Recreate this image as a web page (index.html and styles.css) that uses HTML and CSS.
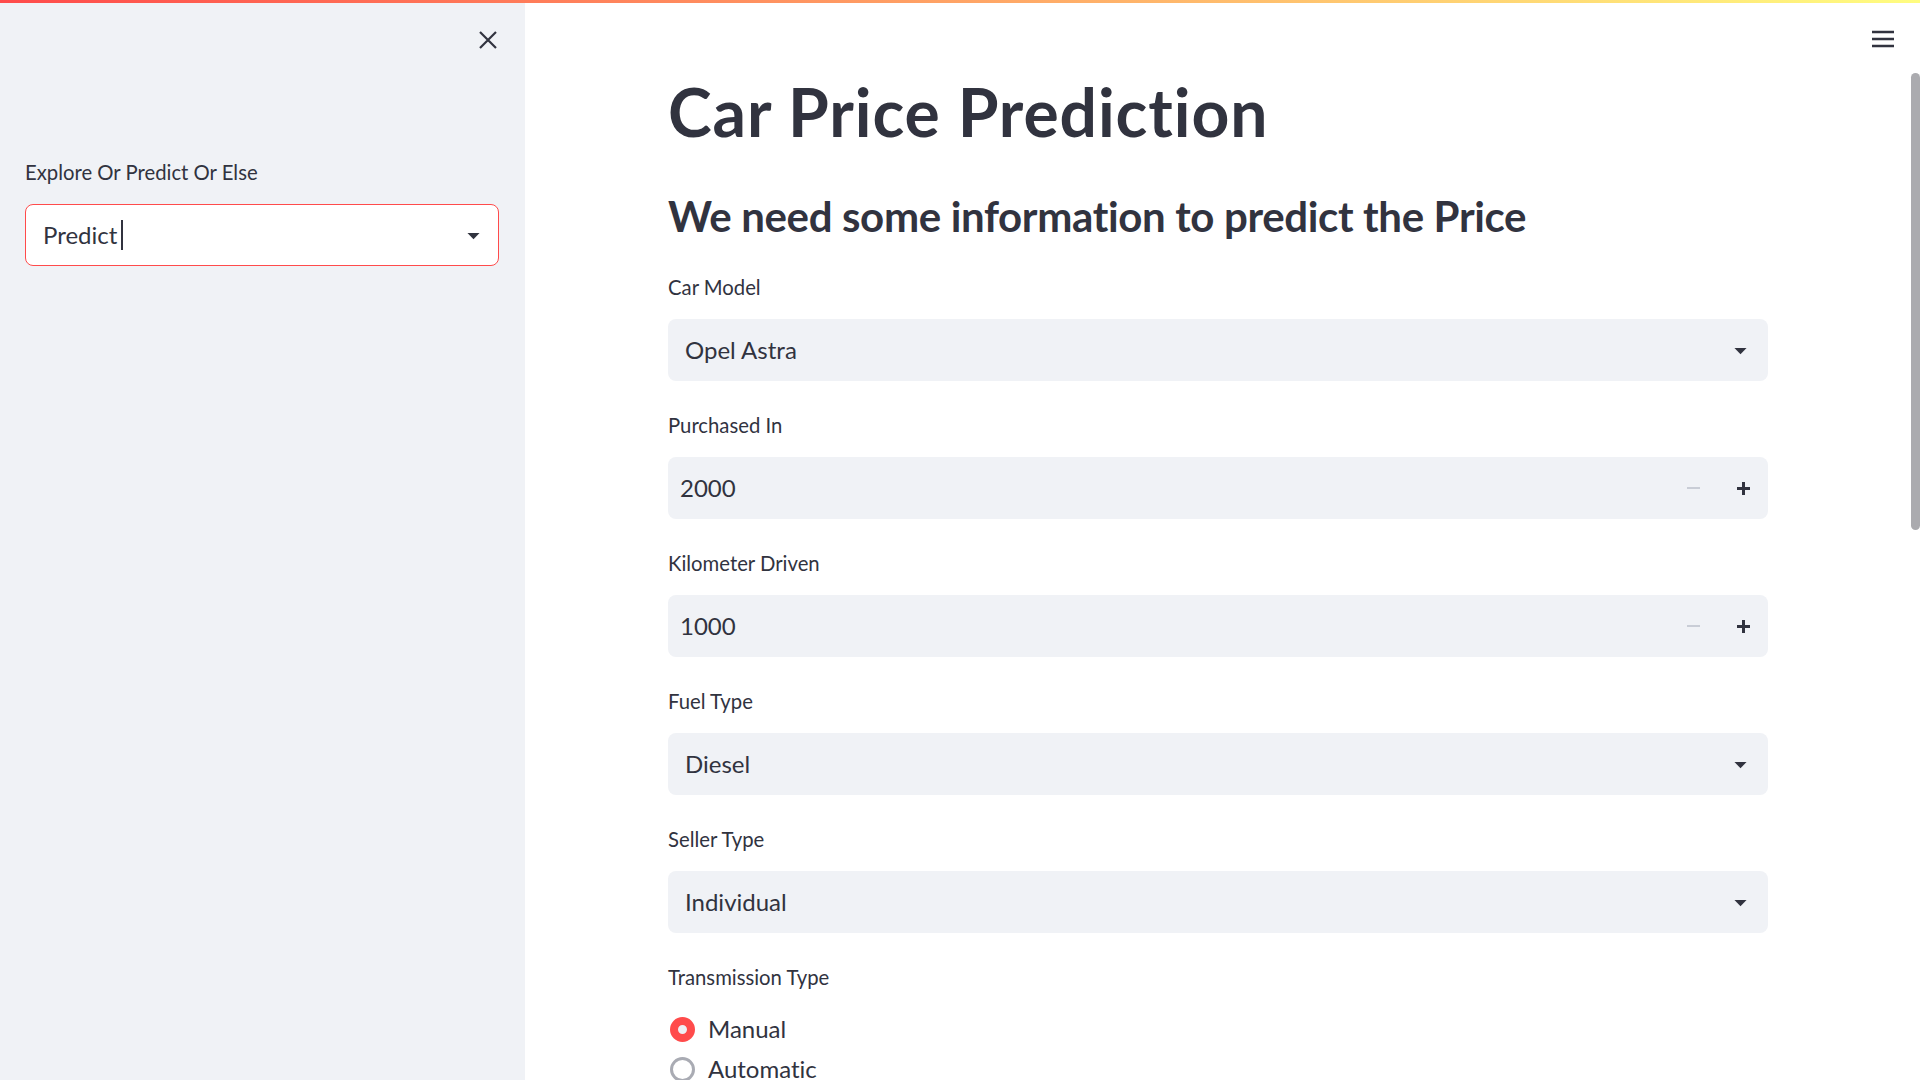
FILE: index.html
```html
<!DOCTYPE html>
<html lang="en">
<head>
<meta charset="utf-8">
<title>Car Price Prediction</title>
<link rel="stylesheet" href="styles.css">
</head>
<body>
<div class="decoration"></div>
<div class="app">
  <aside class="sidebar">
    <div class="sidebar-top">
      <button class="close-btn" aria-label="Close sidebar">
        <svg width="18" height="18" viewBox="0 0 18 18"><path d="M1 1L17 17M17 1L1 17" stroke="#31333f" stroke-width="2.2" fill="none"/></svg>
      </button>
    </div>
    <div class="field">
      <div class="label">Explore Or Predict Or Else</div>
      <div class="select select-focus">
        <span class="value">Predict</span><span class="caret"></span>
        <svg class="arrow" width="29" height="29" viewBox="0 0 24 24"><path d="M7 10l5 5 5-5z" fill="#31333f"/></svg>
      </div>
    </div>
  </aside>

  <main class="main">
    <button class="menu-btn" aria-label="Menu">
      <svg width="24" height="24" viewBox="0 0 24 24"><path d="M1 5H23M1 12H23M1 19H23" stroke="#31333f" stroke-width="2.6" fill="none"/></svg>
    </button>
    <div class="scroll-thumb"></div>

    <div class="block">
      <h1 class="title">Car Price Prediction</h1>
      <h2 class="subtitle">We need some information to predict the Price</h2>

      <div class="field">
        <div class="label">Car Model</div>
        <div class="select">
          <span class="value">Opel Astra</span>
          <svg class="arrow" width="29" height="29" viewBox="0 0 24 24"><path d="M7 10l5 5 5-5z" fill="#31333f"/></svg>
        </div>
      </div>

      <div class="field">
        <div class="label">Purchased In</div>
        <div class="number">
          <span class="num-value">2000</span>
          <span class="step step-minus"><i class="minus"></i></span>
          <span class="step"><i class="plus"></i></span>
        </div>
      </div>

      <div class="field">
        <div class="label">Kilometer Driven</div>
        <div class="number">
          <span class="num-value">1000</span>
          <span class="step step-minus"><i class="minus"></i></span>
          <span class="step"><i class="plus"></i></span>
        </div>
      </div>

      <div class="field">
        <div class="label">Fuel Type</div>
        <div class="select">
          <span class="value">Diesel</span>
          <svg class="arrow" width="29" height="29" viewBox="0 0 24 24"><path d="M7 10l5 5 5-5z" fill="#31333f"/></svg>
        </div>
      </div>

      <div class="field">
        <div class="label">Seller Type</div>
        <div class="select">
          <span class="value">Individual</span>
          <svg class="arrow" width="29" height="29" viewBox="0 0 24 24"><path d="M7 10l5 5 5-5z" fill="#31333f"/></svg>
        </div>
      </div>

      <div class="field">
        <div class="label">Transmission Type</div>
        <div class="radio-group">
          <div class="radio"><span class="dot dot-on"></span><span class="radio-text">Manual</span></div>
          <div class="radio"><span class="dot"></span><span class="radio-text">Automatic</span></div>
        </div>
      </div>
    </div>
  </main>
</div>
</body>
</html>
```
FILE: styles.css
```css
* { box-sizing: border-box; }
html, body { margin: 0; padding: 0; height: 100%; overflow: hidden; }
body {
  font-family: Lato, "Liberation Sans", sans-serif;
  font-variant-ligatures: none;
  color: #31333f;
  background: #ffffff;
}
.decoration {
  height: 3px;
  background: linear-gradient(90deg, #ff4b4b, #fffd80);
}
.app {
  display: flex;
  height: 1077px;
}
.sidebar {
  width: 525px;
  flex: none;
  background: #f0f2f6;
  padding: 19px 26px 0 25px;
}
.sidebar-top {
  display: flex;
  justify-content: flex-end;
  height: 36px;
  margin-right: 2px;
  margin-bottom: 98px;
}
.close-btn, .menu-btn {
  border: none;
  background: none;
  padding: 0;
  display: flex;
  align-items: center;
  justify-content: center;
}
.close-btn { width: 18px; height: 36px; }

.main {
  flex: 1;
  position: relative;
  display: flex;
  justify-content: center;
  padding: 69px 9px 0 0;
}
.menu-btn {
  position: absolute;
  top: 24px;
  right: 25px;
  width: 24px;
  height: 24px;
}
.scroll-thumb {
  position: absolute;
  right: 0;
  top: 70px;
  width: 9px;
  height: 457px;
  border-radius: 5px;
  background: #ababaf;
}
.block { width: 1100px; }

.title {
  margin: 0 0 40px;
  font-size: 66px;
  line-height: 79px;
  font-weight: 700;
  letter-spacing: 0.9px;
}
.subtitle {
  margin: 0 0 30px;
  font-size: 42px;
  line-height: 50px;
  font-weight: 700;
  letter-spacing: -0.35px;
}
.field { margin-bottom: 28px; }
.label {
  font-size: 20.3px;
  line-height: 32px;
  height: 32px;
  margin-bottom: 16px;
}
.select, .number {
  height: 62px;
  background: #f0f2f6;
  border-radius: 8px;
  display: flex;
  align-items: center;
  font-size: 24px;
  line-height: 62px;
}
.select { padding: 0 13px 0 17px; }
.select .value { flex: 0 0 auto; }
.select .arrow { margin-left: auto; flex: none; }
.select-focus {
  background: #ffffff;
  border: 1px solid #ff4b4b;
  padding: 0 10px 0 17px;
}
.caret {
  display: inline-block;
  width: 1.5px;
  height: 30px;
  background: #31333f;
  margin-left: 4px;
}
.number { padding-left: 12px; }
.num-value { flex: 1; }
.step {
  width: 50px;
  height: 62px;
  display: flex;
  align-items: center;
  justify-content: center;
}
.minus {
  display: block;
  width: 13px;
  height: 2.5px;
  background: #c9cdd6;
}
.plus {
  display: block;
  position: relative;
  width: 13px;
  height: 13px;
}
.plus::before, .plus::after {
  content: "";
  position: absolute;
  background: #31333f;
}
.plus::before { left: 0; top: 5px; width: 13px; height: 3px; }
.plus::after { left: 5px; top: 0; width: 3px; height: 13px; }

.radio-group { display: flex; flex-direction: column; }
.radio {
  display: flex;
  align-items: center;
  height: 40px;
  padding-left: 2px;
  font-size: 24px;
  line-height: 40px;
}
.dot {
  width: 25px;
  height: 25px;
  border-radius: 50%;
  border: 3px solid #a9abb3;
  background: #ffffff;
  margin-right: 13px;
  flex: none;
}
.dot-on {
  border: 8px solid #ff4b4b;
  background: #eef0f4;
}
```
